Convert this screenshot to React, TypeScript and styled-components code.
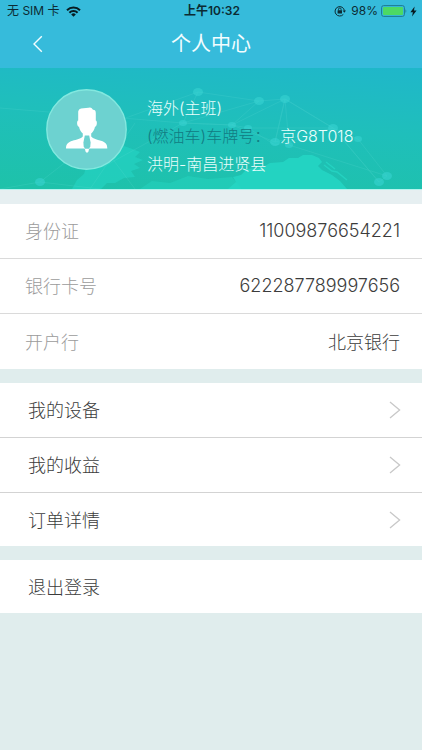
import React from "react";
import styled, { createGlobalStyle } from "styled-components";

const GlobalStyle = createGlobalStyle`
  * { box-sizing: border-box; }
  body {
    margin: 0;
    background: #e0eded;
    color: #3c3c3c;
    font-family: Inter, "Noto Sans CJK SC", sans-serif;
  }
  button { font: inherit; color: inherit; border: 0; background: none; padding: 0; cursor: pointer; }
`;

const Page = styled.div`
  min-height: 100vh;
  display: flex;
  flex-direction: column;
`;

const Header = styled.header`
  background: #36bbdb;
`;

const StatusBar = styled.div`
  display: grid;
  grid-template-columns: 1fr auto 1fr;
  align-items: center;
  height: 22px;
  padding: 0 5px 0 7px;
  font-size: 12px;
  line-height: 22px;
  color: #0c2b33;
`;

const StatusGroup = styled.div<{ $end?: boolean }>`
  display: flex;
  align-items: center;
  gap: ${(p) => (p.$end ? "5px" : "6px")};
  justify-content: ${(p) => (p.$end ? "flex-end" : "flex-start")};
`;

const Clock = styled.time`
  font-weight: 600;
`;

const BatteryGroup = styled.span`
  display: flex;
  align-items: center;
  gap: 3px;
`;

const NavBar = styled.div`
  display: grid;
  grid-template-columns: 60px 1fr 60px;
  align-items: center;
  height: 46px;
  padding-bottom: 2px;
`;

const BackButton = styled.button`
  display: flex;
  align-items: center;
  height: 44px;
  && { padding-left: 32px; }
`;

const Title = styled.h1`
  margin: 0;
  text-align: center;
  font-size: 20px;
  line-height: 28px;
  font-weight: 400;
  color: #f2fdff;
`;

const Banner = styled.section`
  position: relative;
  display: flex;
  align-items: center;
  gap: 20px;
  height: 122px;
  padding: 2px 0 0 46px;
  background: linear-gradient(184deg, #1fb7ca 0%, #1fbfbb 45%, #1ec2a9 100%);
  border-bottom: 1px solid #b4f5ef;
`;

const BannerArt = styled.svg`
  position: absolute;
  inset: 0;
  width: 100%;
  height: 100%;
`;

const Avatar = styled.svg`
  position: relative;
  flex: none;
`;

const Details = styled.div`
  position: relative;
  padding-top: 12px;
  font-size: 16px;
  font-weight: 300;
  line-height: 28px;
  color: #e9fefc;
`;

const Detail = styled.p`
  margin: 0;
  display: flex;
  gap: 10px;
`;

const Muted = styled.span`
  color: #127b82;
`;

const InfoList = styled.dl`
  margin: 0;
  background: #fff;
  border-top: 14px solid #e6eff1;
`;

const InfoRow = styled.div`
  display: flex;
  align-items: center;
  justify-content: space-between;
  height: 55px;
  padding: 0 22px 2px 25px;
  font-size: 18px;
  font-weight: 300;
  border-bottom: 1px solid #dadada;
  &:last-child { border-bottom: 0; }
`;

const Label = styled.dt`
  color: #9b9b9b;
`;

const Value = styled.dd`
  margin: 0;
`;

const Menu = styled.nav`
  margin-top: 14px;
  background: #fff;
`;

const MenuRow = styled.button`
  display: flex;
  align-items: center;
  justify-content: space-between;
  width: 100%;
  height: 55px;
  text-align: left;
  && {
    padding: 0 21px 0 28px;
    font-size: 18px;
    font-weight: 300;
    border-bottom: 1px solid #d3d3d3;
  }
  &&:last-child { height: 53px; border-bottom: 0; }
`;

const MenuLabel = styled.span`
  padding-bottom: 2px;
`;

const WifiIcon = () => (
  <svg width="15" height="11" viewBox="0 0 15 11" aria-hidden="true">
    <g fill="none" stroke="#071c22" strokeWidth="2">
      <path d="M1 4.2a9.2 9.2 0 0 1 13 0" />
      <path d="M3.4 6.7a5.8 5.8 0 0 1 8.2 0" />
    </g>
    <path d="M7.5 10.8 5.2 8.4a3.3 3.3 0 0 1 4.600 0z" fill="#071c22" />
  </svg>
);

const LockIcon = () => (
  <svg width="12" height="12" viewBox="0 0 12 12" aria-hidden="true">
    <path d="M9.3 9.4A4.7 4.7 0 1 1 10.4 5.6" fill="none" stroke="#0c2b33" strokeWidth="1" />
    <path d="M8.6 5.4h3.4l-1.7 2.3z" fill="#0c2b33" />
    <rect x="3.6" y="5.2" width="4.4" height="3.4" rx=".4" fill="#0c2b33" />
    <path d="M4.5 5.4V4.3a1.3 1.3 0 0 1 2.6 0v1.1" fill="none" stroke="#0c2b33" strokeWidth=".9" />
  </svg>
);

const BatteryIcon = () => (
  <svg width="26" height="12" viewBox="0 0 26 12" aria-hidden="true">
    <rect x=".6" y=".6" width="22.8" height="10.8" rx="2" fill="none" stroke="#1d7a91" />
    <rect x="2" y="2" width="20" height="8" rx="1" fill="#4cd964" />
    <path d="M24.5 4.2c1 .4 1 3.2 0 3.6z" fill="#1d7a91" />
  </svg>
);

const BoltIcon = () => (
  <svg width="7" height="11" viewBox="0 0 7 11" aria-hidden="true">
    <path d="M4.6.4.4 6.2h2.5L2 10.6l4.6-6H4z" fill="#071c22" />
  </svg>
);

const BackIcon = () => (
  <svg width="11" height="18" viewBox="0 0 11 18" aria-hidden="true">
    <path d="M9.8 1.2 2 9l7.8 7.8" fill="none" stroke="#f2fdff" strokeWidth="1.4" />
  </svg>
);

const ForwardIcon = () => (
  <svg width="12" height="18" viewBox="0 0 12 18" aria-hidden="true">
    <path d="M1 1l9.6 8L1 17" fill="none" stroke="#c8c8c8" strokeWidth="1.3" />
  </svg>
);

const nodes = [
  [198, 24, 5], [259, 33, 5], [285, 31, 5], [183, 55, 4], [232, 57, 4], [248, 60, 4],
  [275, 74, 5], [289, 77, 4], [333, 60, 5], [358, 71, 4], [379, 114, 5], [387, 108, 5], [40, 114, 5],
];

const NetworkArt = () => (
  <BannerArt viewBox="0 0 422 121" preserveAspectRatio="xMidYMax slice" aria-hidden="true">
    <g fill="#25d6c4">
      <path
        d="M72 121l5-9 7-6 3-10 9-8 11-9 10-3 10 3 13 5-5 5 8 3-9 4 6 4-9 3 4 6-11 1-9 5-8 0-6 6z"
        opacity=".6"
      />
      <path
        d="M228 121l8-7-3-5 8-2 6-6 16-2 7-4 13-1 6-4 9 0 5-3 9 0 7 3 3 4-4 4 4 4 10 5 8 6 7 8z"
        opacity=".85"
      />
      <path d="M140 121l12-8 18 2 18-7 20 3 24-2 10 12z" opacity=".45" />
    </g>
    <path d="M324 97l8 6 5 1 10 8M326 94l9 7" fill="none" stroke="#25d6c4" strokeWidth="1.5" opacity=".8" />
    <g fill="none" stroke="#6fe3dc" strokeWidth=".7" opacity=".22">
      <path d="M40 114l80-62 78-28 61 9 26-2 48 29 25 11 29 37-8 6-46-54-44 14-14 3-27-17-16-3-49-2 15-31" />
      <path d="M259 33l-27 24 43 17 10-43-10 43 58-14 46 54M183 55l49 2 53-26 4 46 98 31M0 40l183 15 76-22M40 114L0 121M40 114l60 7M183 55l-80 44M285 31l48 29-85 0" />
      <path d="M103 78l32 43M135 55l-45 66" />
    </g>
    <g fill="#3ad5d4" opacity=".55">
      {nodes.map(([x, y, r]) => (
        <ellipse key={`${x}-${y}`} cx={x} cy={y} rx={r} ry={r - 1} />
      ))}
    </g>
  </BannerArt>
);

const AvatarImage = () => (
  <Avatar width="81" height="81" viewBox="0 0 81 81" role="img" aria-label="头像">
    <circle cx="40.5" cy="40.5" r="39.7" fill="#6dd2d0" stroke="#83e8df" strokeWidth="1.4" />
    <path
      fill="#fff"
      d="M32.200 22.500Q32.500 19.800 35 19.400L42.500 18.700 44 18.500 45.500 18.900 47 20.800 48.500 21Q49.800 21.500 49.800 24V31.500C51.500 31.700 51.200 37.300 49 37.800C48.300 41 47 43 45.200 44.500V47.500C47 50 51 50.500 55 51.800C59.500 53.300 61.300 55 61.300 59.600H43.500L42.700 61V62.300L41 64 39.300 62.300V61L38.500 59.600H20C20 55 22 53.300 26.500 51.800C30.500 50.500 35 50 36.800 47.500V44.500C35 43 33.700 41 33 37.800C30.800 37.300 30.500 31.700 32.200 31.500Z"
    />
    <path fill="#6dd2d0" d="M38.800 46.500h4.400l1.400 7-.3 4-1.300 2.200h-4l-1.300-2.200-.3-4z" />
  </Avatar>
);

const info = [
  ["身份证", "11009876654221"],
  ["银行卡号", "622287789997656"],
  ["开户行", "北京银行"],
];

const links = ["我的设备", "我的收益", "订单详情"];

export default function App() {
  return (
    <Page>
      <GlobalStyle />
      <Header>
        <StatusBar>
          <StatusGroup>
            <span>无 SIM 卡</span>
            <WifiIcon />
          </StatusGroup>
          <Clock>上午10:32</Clock>
          <StatusGroup $end>
            <LockIcon />
            <BatteryGroup>
              <span>98%</span>
              <BatteryIcon />
              <BoltIcon />
            </BatteryGroup>
          </StatusGroup>
        </StatusBar>
        <NavBar>
          <BackButton aria-label="返回">
            <BackIcon />
          </BackButton>
          <Title>个人中心</Title>
        </NavBar>
      </Header>
      <main>
        <Banner>
          <NetworkArt />
          <AvatarImage />
          <Details>
            <Detail>海外(主班)</Detail>
            <Detail>
              <Muted>(燃油车)车牌号：</Muted>
              <span>京G8T018</span>
            </Detail>
            <Detail>洪明-南昌进贤县</Detail>
          </Details>
        </Banner>
        <InfoList>
          {info.map(([label, value]) => (
            <InfoRow key={label}>
              <Label>{label}</Label>
              <Value>{value}</Value>
            </InfoRow>
          ))}
        </InfoList>
        <Menu>
          {links.map((label) => (
            <MenuRow key={label}>
              <MenuLabel>{label}</MenuLabel>
              <ForwardIcon />
            </MenuRow>
          ))}
        </Menu>
        <Menu>
          <MenuRow>
            <MenuLabel>退出登录</MenuLabel>
          </MenuRow>
        </Menu>
      </main>
    </Page>
  );
}
